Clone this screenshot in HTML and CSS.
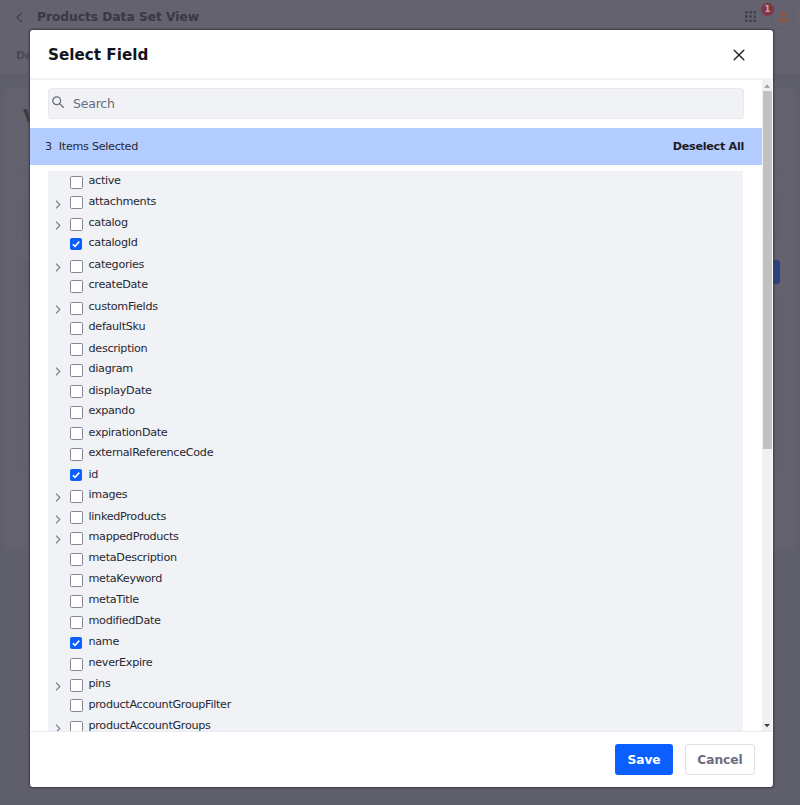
FILE: index.html
```html
<!DOCTYPE html>
<html lang="en">
<head>
<meta charset="utf-8">
<title>Products Data Set View</title>
<link rel="stylesheet" href="styles.css">
</head>
<body>
<div class="page">
  <header class="topbar">
    <svg class="back" viewBox="0 0 7 11"><path d="M6 .7 1 5.5 6 10.3"/></svg>
    <h1>Products Data Set View</h1>
    <svg class="grid" viewBox="0 0 11 11"><path d="M0 0h2.6v2.6H0zM4.2 0h2.6v2.6H4.2zM8.4 0H11v2.6H8.4zM0 4.2h2.6v2.6H0zM4.2 4.2h2.6v2.6H4.2zM8.4 4.2H11v2.6H8.4zM0 8.4h2.6V11H0zM4.2 8.4h2.6V11H4.2zM8.4 8.4H11V11H8.4z"/></svg>
    <div class="avatar">
      <svg viewBox="0 0 10 12"><circle cx="5" cy="2.8" r="2.5"/><path d="M.3 9.3C.3 5.2 9.7 5.2 9.7 9.3 9.7 11.5 8.3 11.5 5 11.5S.3 11.5.3 9.3z"/></svg>
      <span class="count">1</span>
    </div>
  </header>
  <nav class="tabs">De</nav>
  <main class="card">
    <h2>V</h2>
    <div class="rule"></div>
    <div class="field"></div>
    <div class="tools"><div class="tool-search"></div><div class="add"></div></div>
    <div class="table"><div></div><div></div><div></div><div></div></div>
  </main>
</div>

<section class="modal">
  <header class="modal-head">
    <h2>Select Field</h2>
    <svg class="close" viewBox="0 0 12 12"><path d="M1.2 1.2l9.6 9.6M10.8 1.2l-9.6 9.6"/></svg>
  </header>
  <div class="modal-body">
    <div class="content">
      <div class="search">
        <svg viewBox="0 0 12 12"><circle cx="4.7" cy="4.7" r="3.9"/><path d="M7.5 7.5 11.3 11.3"/></svg>
        <span>Search</span>
      </div>
      <div class="selected"><span>3</span><span class="items">Items Selected</span><strong>Deselect All</strong></div>
      <ul class="tree" id="tree"></ul>
    </div>
    <div class="scroll">
      <svg viewBox="0 0 10 11"><path class="off" d="M2 7.7 5 4.4 8 7.7z"/></svg>
      <div class="thumb"></div>
      <svg viewBox="0 0 10 11"><path d="M2 4 5 7.2 8 4z"/></svg>
    </div>
  </div>
  <footer class="modal-foot"><button class="save">Save</button><button class="cancel">Cancel</button></footer>
</section>
<script src="tree.js"></script>
</body>
</html>
```
FILE: styles.css
```css
* { box-sizing: border-box; }
body { margin: 0; width: 800px; height: 805px; overflow: hidden; background: #5f5e6b; font-family: "DejaVu Sans", sans-serif; font-size: 11.2px; letter-spacing: -0.3px; color: #272833; }
h1, h2 { margin: 0; }
svg { display: block; flex: none; }

.page { height: 805px; color: #3d3c4a; }
.topbar { display: flex; align-items: center; height: 36px; padding: 0 5px 3px 16px; background: #63626e; }
.back { width: 7px; height: 11px; fill: none; stroke: #3f3e4c; stroke-width: 1.1; margin-right: 14px; margin-top: 2px; }
.topbar h1 { font-size: 12.2px; line-height: 16px; letter-spacing: 0; flex: 1; color: #393845; }
.grid { width: 11px; height: 11px; fill: #42414f; margin-right: 14px; }
.avatar { position: relative; width: 25px; height: 25px; border: 1px solid #5e5d69; border-radius: 50%; display: flex; align-items: center; justify-content: center; }
.avatar svg { width: 10px; height: 12px; fill: #8a5946; }
.count { position: absolute; left: -10px; top: -2px; width: 13px; height: 13px; border-radius: 50%; background: #833544; color: #b0afb6; font-weight: bold; font-size: 8.5px; letter-spacing: 0; line-height: 13px; text-align: center; }
.tabs { height: 38px; padding: 13px 16px 0; line-height: 14px; font-weight: bold; color: #4a4957; background: #63626e; }
.card { height: 462px; margin: 14px 5px 0; padding: 17px 15px 0 18px; background: #62616d; border-radius: 3px; }
.card h2 { font-size: 18px; line-height: 21px; color: #393845; }
.rule { height: 1px; margin-top: 47px; background: #5b5a67; }
.field { height: 40px; margin-top: 25px; background: #5f5e6b; border-bottom: 1px solid #535873; }
.tools { display: flex; justify-content: space-between; margin-top: 21px; }
.tool-search { width: 300px; height: 30px; background: #5f5e6b; }
.add { width: 60px; height: 24px; border-radius: 3px; background: #2b4480; }
.table { height: 170px; margin-top: 7px; border: 1px solid #5f5e6a; display: grid; grid-template-rows: repeat(4, 1fr); }
.table div { border-bottom: 1px solid #5f5e6a; }

.modal { position: absolute; left: 30px; top: 30px; width: 743px; height: 757px; background: #fff; border-radius: 3px; box-shadow: 0 0 2px 1px #393a45; display: flex; flex-direction: column; overflow: hidden; }
.modal-head { height: 50px; flex: none; padding: 2px 28px 0 18px; display: flex; align-items: center; justify-content: space-between; border-bottom: 2px solid #f0f0f5; color: #14141c; }
.modal-head h2 { font-size: 15.2px; line-height: 20px; letter-spacing: 0; }
.close { width: 12px; height: 12px; fill: none; stroke: #272833; stroke-width: 1.5; stroke-linecap: round; }
.modal-body { height: 651px; flex: none; display: flex; }
.content { flex: 1; overflow: hidden; }
.search { height: 31px; margin: 8px 18px 9px; padding: 0 0 1px 5px; display: flex; align-items: center; background: #f1f2f5; border: 1px solid #e7e7ed; border-radius: 3px; font-size: 12.5px; letter-spacing: -0.2px; color: #6b6c7e; }
.search svg { width: 12px; height: 12px; margin: 0 9px 2px -2px; fill: none; stroke: #6b6c7e; stroke-width: 1.3; stroke-linecap: round; }
.selected { height: 37px; padding: 0 18px 1px 15px; display: flex; align-items: center; background: #b3cdff; }
.items { margin-left: 7px; flex: 1; }
.selected strong { color: #1c1c24; }
.tree { list-style: none; margin: 6px 19px 0 18px; padding: 0; height: 600px; background: #f1f2f5; }
.tree li { display: flex; height: 20.5px; }
.tree li:nth-child(even) { height: 21.44px; }
.tree svg { width: 6px; height: 9px; margin: 8px 9px 0 7px; fill: none; stroke: #777889; stroke-width: 1.1; }
.tree .leaf svg { visibility: hidden; }
.box { flex: none; width: 13px; height: 13px; margin: 4.7px 5.5px 0 0; border: 1px solid #858594; border-radius: 1.5px; background: #fff; }
.box.on { width: 12px; height: 12px; margin-right: 6.5px; border-color: #0b5fff; background: #0b5fff; }
.tree .box svg { display: none; }
.tree .box.on svg { display: block; visibility: visible; width: 10px; height: 10px; margin: 0; stroke: #fff; stroke-width: 1.6; }
.tree span { line-height: 14px; padding-top: 3px; }
.scroll { width: 11px; flex: none; display: flex; flex-direction: column; background: #f0f0f0; border-right: 1px solid #fff; }
.scroll svg { width: 10px; height: 11px; fill: #404040; }
.scroll .off { fill: #9b9b9b; }
.thumb { height: 358px; margin: 0 0 auto 1px; background: #c1c1c1; }
.modal-foot { flex: 1; padding: 0 18px; border-top: 1px solid #ebebf0; display: flex; align-items: center; justify-content: flex-end; gap: 12px; }
.modal-foot button { height: 31px; padding: 0; border-radius: 3px; font: bold 12.2px "DejaVu Sans", sans-serif; letter-spacing: 0; }
.modal-foot .save { width: 58px; border: 0; background: #0b5fff; color: #fff; }
.modal-foot .cancel { width: 70px; border: 1px solid #dedee8; background: #fff; color: #6b6c7e; }
```
FILE: tree.js
```js
// A leading ">" marks an expandable field, "*" a selected one.
const fields = "active >attachments >catalog *catalogId >categories createDate >customFields defaultSku description >diagram displayDate expando expirationDate externalReferenceCode *id >images >linkedProducts >mappedProducts metaDescription metaKeyword metaTitle modifiedDate *name neverExpire >pins productAccountGroupFilter >productAccountGroups".split(" ");
document.getElementById("tree").innerHTML = fields.map(f => {
  const name = f.replace(/^[>*]/, "");
  return `<li class="${f[0] === ">" ? "" : "leaf"}"><svg viewBox="0 0 6 9"><path d="M1 .7 4.8 4.5 1 8.3"/></svg><div class="box ${f[0] === "*" ? "on" : ""}"><svg viewBox="0 0 10 10"><path d="M1.8 5.2 4 7.4 8.3 2.6"/></svg></div><span>${name}</span></li>`;
}).join("");
```
